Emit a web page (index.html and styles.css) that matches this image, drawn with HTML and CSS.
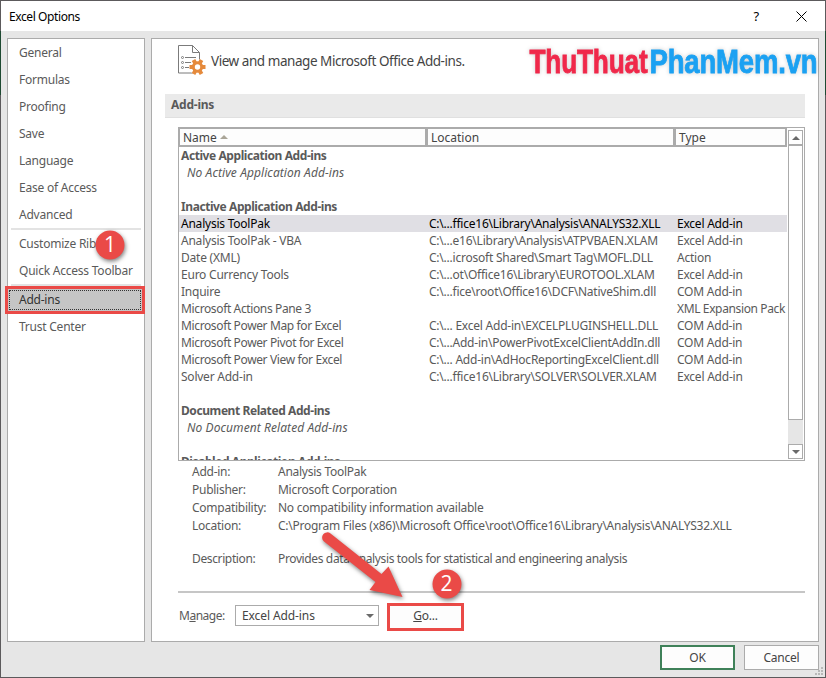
FILE: index.html
```html
<!DOCTYPE html>
<html lang="en">
  <head>
    <meta charset="UTF-8" />
    <meta name="viewport" content="width=device-width, initial-scale=1" />
    <title>Excel Options</title>
    <link rel="stylesheet" href="styles.css">
  </head>
  <body>
    <div class="dialog">
      <div class="titlebar">
        <span class="title">Excel Options</span>
        <span class="help">?</span>
        <svg class="close" width="11" height="11" viewBox="0 0 11 11">
          <path d="M0.5 0.5L10.5 10.5M10.5 0.5L0.5 10.5" stroke="#000" fill="none" />
        </svg>
      </div>

      <div class="content">
        <div class="nav">
          <div class="nav-item">General</div>
          <div class="nav-item">Formulas</div>
          <div class="nav-item">Proofing</div>
          <div class="nav-item">Save</div>
          <div class="nav-item">Language</div>
          <div class="nav-item">Ease of Access</div>
          <div class="nav-item">Advanced</div>
          <div class="divider"></div>
          <div class="nav-item">Customize Ribbon</div>
          <div class="nav-item">Quick Access Toolbar</div>
          <div class="divider"></div>
          <div class="nav-item active">Add-ins</div>
          <div class="nav-item">Trust Center</div>
        </div>

        <div class="main">
          <div class="heading">
            <svg width="28" height="31" viewBox="0 0 28 31">
              <path d="M0.5 0.5H14.5L21.5 7.5V28H0.5Z" fill="#fff" stroke="#7b7b7b" />
              <path d="M14.5 0.5V7.5H21.5" fill="none" stroke="#7b7b7b" />
              <path d="M7 12.5H18M7 17.5H14M7 22.5H11" stroke="#7b7b7b" />
              <g fill="#fff" stroke="#7b7b7b">
                <circle cx="4.5" cy="12.5" r="1" />
                <circle cx="4.5" cy="17.5" r="1" />
                <circle cx="4.5" cy="22.5" r="1" />
              </g>
              <g transform="translate(19.5 22)">
                <circle r="8" fill="#fff" />
                <g fill="#e58a3c">
                  <rect x="-8" y="-2" width="16" height="4" />
                  <rect x="-8" y="-2" width="16" height="4" transform="rotate(60)" />
                  <rect x="-8" y="-2" width="16" height="4" transform="rotate(120)" />
                  <circle r="5.7" />
                </g>
                <circle r="2.7" fill="#fff" />
              </g>
            </svg>
            <span>View and manage Microsoft Office Add-ins.</span>
          </div>

          <div class="section">Add-ins</div>

          <div class="list">
            <div class="table">
              <div class="row head">
                <span>Name <i class="sort"></i></span>
                <span>Location</span>
                <span>Type</span>
              </div>
              <div class="row group">Active Application Add-ins</div>
              <div class="row none">No Active Application Add-ins</div>
              <div class="row"></div>
              <div class="row group">Inactive Application Add-ins</div>
              <div class="row selected"><span>Analysis ToolPak</span><span>C:\...ffice16\Library\Analysis\ANALYS32.XLL</span><span>Excel Add-in</span></div>
              <div class="row"><span>Analysis ToolPak - VBA</span><span>C:\...e16\Library\Analysis\ATPVBAEN.XLAM</span><span>Excel Add-in</span></div>
              <div class="row"><span>Date (XML)</span><span>C:\...icrosoft Shared\Smart Tag\MOFL.DLL</span><span>Action</span></div>
              <div class="row"><span>Euro Currency Tools</span><span>C:\...ot\Office16\Library\EUROTOOL.XLAM</span><span>Excel Add-in</span></div>
              <div class="row"><span>Inquire</span><span>C:\...fice\root\Office16\DCF\NativeShim.dll</span><span>COM Add-in</span></div>
              <div class="row"><span class="tight">Microsoft Actions Pane 3</span><span></span><span class="tight">XML Expansion Pack</span></div>
              <div class="row"><span class="tight">Microsoft Power Map for Excel</span><span>C:\... Excel Add-in\EXCELPLUGINSHELL.DLL</span><span>COM Add-in</span></div>
              <div class="row"><span class="tight">Microsoft Power Pivot for Excel</span><span>C:\...Add-in\PowerPivotExcelClientAddIn.dll</span><span>COM Add-in</span></div>
              <div class="row"><span class="tight">Microsoft Power View for Excel</span><span>C:\... Add-in\AdHocReportingExcelClient.dll</span><span>COM Add-in</span></div>
              <div class="row"><span>Solver Add-in</span><span>C:\...ffice16\Library\SOLVER\SOLVER.XLAM</span><span>Excel Add-in</span></div>
              <div class="row"></div>
              <div class="row group">Document Related Add-ins</div>
              <div class="row none">No Document Related Add-ins</div>
              <div class="row"></div>
              <div class="row group">Disabled Application Add-ins</div>
            </div>
            <div class="scrollbar">
              <div class="arrow up"></div>
              <div class="thumb"></div>
              <div class="arrow down"></div>
            </div>
          </div>

          <div class="details">
            <span>Add-in:</span><span>Analysis ToolPak</span>
            <span>Publisher:</span><span>Microsoft Corporation</span>
            <span>Compatibility:</span><span>No compatibility information available</span>
            <span>Location:</span><span>C:\Program Files (x86)\Microsoft Office\root\Office16\Library\Analysis\ANALYS32.XLL</span>
            <span class="desc tight">Description:</span><span class="desc tight">Provides data analysis tools for statistical and engineering analysis</span>
          </div>

          <div class="manage">
            <span class="manage-label">M<u>a</u>nage:</span>
            <div class="select">Excel Add-ins</div>
            <div class="go"><u>G</u>o...</div>
          </div>
        </div>
      </div>

      <div class="footer">
        <div class="btn ok">OK</div>
        <div class="btn">Cancel</div>
      </div>
    </div>

    <!-- Watermark, step numbers and arrow over the dialog -->
    <svg class="overlay" width="826" height="678" viewBox="0 0 826 678">
      <path d="M0 31h1v64h-1zM825 31h1v64h-1z" fill="#1e4a32" />
      <g class="logo">
        <text x="529.5" y="73" textLength="118" lengthAdjust="spacingAndGlyphs" fill="#f0284a" stroke="#f0284a">ThuThuat</text>
        <text x="649.5" y="73" textLength="168" lengthAdjust="spacingAndGlyphs" fill="#1ba1f2" stroke="#1ba1f2">PhanMem.vn</text>
      </g>
      <g class="marks">
        <path d="M324 541.500A5 5 0 0 1 330.500 533.500L381.500 574L388.500 566.500L402.500 597L369.500 590L375.500 582Z" />
        <circle cx="110" cy="245" r="14.500" />
        <circle cx="447" cy="584" r="14.500" />
      </g>
      <g class="numbers">
        <text x="110" y="252">1</text>
        <text x="446.500" y="591">2</text>
      </g>
      <path d="M821 667h2v2h-2zM818 670h2v2h-2zM821 670h2v2h-2zM815 673h2v2h-2zM818 673h2v2h-2zM821 673h2v2h-2z" fill="#b8b8b8" />
    </svg>
  </body>
</html>
```
FILE: styles.css
```css
* {
  box-sizing: border-box;
}
body {
  margin: 0;
  font-family: "Noto Sans", "Open Sans", sans-serif;
  font-size: 12px;
  letter-spacing: -0.23px;
  color: #5a5a5a;
  overflow: hidden;
}
.dialog {
  width: 826px;
  height: 678px;
  background: #e6e6e6;
  border: 1px solid #5c5a5c;
}
.titlebar {
  height: 30px;
  display: flex;
  align-items: center;
  background: #fff;
  color: #000;
  padding: 0 18px 0 8px;
}
.title {
  flex: 1;
  letter-spacing: -0.4px;
}
.help {
  font-size: 13px;
  margin-right: 37px;
}
.content {
  display: flex;
  gap: 6px;
  height: 604px;
  margin: 7px 6px 0;
}
.nav,
.main {
  background: #fff;
  border: 1px solid #ababab;
}
.nav {
  width: 138px;
}
.nav-item {
  height: 27px;
  line-height: 28px;
  padding-left: 11px;
  white-space: nowrap;
}
.divider {
  height: 2px;
  margin: 0 3px;
  background: #e3e3e3;
}
.nav-item.active {
  background: #c5c5c5;
  color: #333;
  width: 140px;
  height: 28px;
  line-height: 22px;
  margin: 0 0 -1px -3px;
  border: 3px solid #ea4a47;
  outline: 1px dotted #333;
  outline-offset: -5px;
}
.main {
  width: 668px;
  padding: 6px 13px 0;
}
.heading {
  display: flex;
  height: 49px;
  padding-left: 13px;
  gap: 5px;
  font-size: 13.5px;
  letter-spacing: -0.45px;
  line-height: 33px;
  color: #444;
}
.section {
  height: 24px;
  line-height: 22px;
  padding-left: 6px;
  background: #eaeaea;
  border-bottom: 1px solid #e0e0e0;
  font-weight: bold;
}
.list {
  display: flex;
  width: 627px;
  height: 334px;
  margin: 9px 0 0 13px;
  border: 1px solid #ababab;
  overflow: hidden;
}
.table {
  width: 608px;
}
.row {
  display: grid;
  grid-template-columns: 248px 248px 112px;
  height: 17px;
  line-height: 18px;
  padding-left: 2px;
  white-space: nowrap;
}
.tight {
  letter-spacing: -0.37px;
}
.head {
  height: 19px;
  padding: 0;
  background: #ababab;
  color: #444;
  letter-spacing: 0;
}
.head span {
  margin: 1px 2px 2px 1px;
  padding-left: 3px;
  background: #fdfdfd;
  line-height: 18px;
  height: 16px;
}
.sort {
  display: inline-block;
  border: 4px solid transparent;
  border-top: 0;
  border-bottom-color: #aaa598;
  vertical-align: 3px;
}
.group {
  display: block;
  font-weight: bold;
  letter-spacing: -0.42px;
}
.none {
  display: block;
  font-style: italic;
  letter-spacing: 0.08px;
  padding-left: 8px;
}
.selected {
  background: #e0dfe4;
  color: #000;
}
.scrollbar {
  width: 15px;
  height: 329px;
  margin: 2px 1px;
  display: flex;
  flex-direction: column;
  background: #e6e6e6;
}
.arrow {
  height: 15px;
  background: #fff;
  border: 1px solid #ababab;
  display: flex;
  align-items: center;
  justify-content: center;
}
.arrow::before {
  content: "";
  border: 4px solid transparent;
}
.up::before {
  border-top: 0;
  border-bottom-color: #6a6a6a;
}
.down::before {
  border-bottom: 0;
  border-top-color: #6a6a6a;
}
.thumb {
  height: 275px;
  margin-bottom: auto;
  background: #fff;
  border: 1px solid #ababab;
}
.details {
  display: grid;
  grid-template-columns: 86px 1fr;
  grid-auto-rows: 18px;
  line-height: 18px;
  letter-spacing: -0.26px;
  height: 130px;
  margin: 2px 0 0 13px;
  padding-left: 14px;
  border-bottom: 2px solid #c6c6c6;
  white-space: nowrap;
}
.desc {
  margin-top: 15px;
}
.manage {
  display: flex;
  align-items: flex-start;
  padding: 10px 0 0 14px;
}
.manage-label {
  width: 56px;
  line-height: 26px;
  letter-spacing: -0.5px;
}
.select {
  width: 144px;
  height: 21px;
  line-height: 20px;
  letter-spacing: -0.1px;
  margin-top: 2px;
  padding: 0 4px 0 6px;
  border: 1px solid #ababab;
  color: #444;
  display: flex;
  justify-content: space-between;
  align-items: center;
}
.select::after {
  content: "";
  border: 4px solid transparent;
  border-bottom: 0;
  border-top-color: #6a6a6a;
}
.go {
  width: 77px;
  height: 28px;
  margin-left: 8px;
  border: 3px solid #ea4a47;
  line-height: 20px;
  text-align: center;
  color: #444;
  background: #fdfdfd;
}
.footer {
  display: flex;
  justify-content: flex-end;
  gap: 9px;
  padding: 3px 6px 0 0;
}
.btn {
  width: 75px;
  height: 25px;
  border: 1px solid #ababab;
  background: #fdfdfd;
  color: #444;
  text-align: center;
  line-height: 24px;
}
.ok {
  border: 2px solid #3f8159;
  line-height: 22px;
}
.overlay {
  position: absolute;
  left: 0;
  top: 0;
}
.logo {
  font: bold 34px "Liberation Sans Narrow", "Liberation Sans", sans-serif;
  stroke-width: 0.8px;
  filter: drop-shadow(0 0 2px rgba(0, 0, 0, 0.2));
}
.marks {
  fill: #ea4a47;
  filter: drop-shadow(1px 2px 2px rgba(0, 0, 0, 0.5));
}
.numbers {
  font: 21px "Open Sans", sans-serif;
  fill: #fff;
  text-anchor: middle;
}
```
